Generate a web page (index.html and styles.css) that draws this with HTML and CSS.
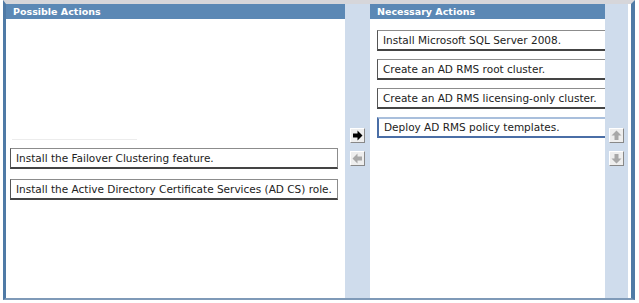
FILE: index.html
```
<!DOCTYPE html>
<html>
<head>
	<meta charset="utf-8">
	<title>Build List</title>
	<link rel="stylesheet" href="styles.css">
</head>
<body>
	<div class="frame">
		<div class="columns">
			<div class="panel left">
				<div class="head">Possible Actions</div>
				<div class="body">
					<div class="rule"></div>
					<div class="item">Install the Failover Clustering feature.</div>
					<div class="item">Install the Active Directory Certificate Services (AD CS) role.</div>
				</div>
			</div>
			<div class="gutter">
				<div class="btn">
					<svg width="11" height="11" viewBox="0 0 11 11"><path d="M1 3.5h4.5V0.5L10.5 5.5 5.5 10.5V7.5H1z" fill="#000"/></svg>
				</div>
				<div class="btn">
					<svg width="11" height="11" viewBox="0 0 11 11"><path d="M10 3.5H5.5V0.5L0.5 5.5 5.5 10.5V7.5H10z" fill="#a8a8a8"/></svg>
				</div>
			</div>
			<div class="panel right">
				<div class="head">Necessary Actions</div>
				<div class="body">
					<div class="item wide">Install Microsoft SQL Server 2008.</div>
					<div class="item wide">Create an AD RMS root cluster.</div>
					<div class="item wide">Create an AD RMS licensing-only cluster.</div>
					<div class="item wide selected">Deploy AD RMS policy templates.</div>
				</div>
			</div>
			<div class="gutter side">
				<div class="btn">
					<svg width="11" height="11" viewBox="0 0 11 11"><path d="M3.5 10V5.5H0.5L5.5 0.5 10.5 5.5H7.5V10z" fill="#a8a8a8"/></svg>
				</div>
				<div class="btn">
					<svg width="11" height="11" viewBox="0 0 11 11"><path d="M3.5 1V5.5H0.5L5.5 10.5 10.5 5.5H7.5V1z" fill="#a8a8a8"/></svg>
				</div>
			</div>
		</div>
	</div>
</body>
</html>
```

FILE: styles.css
```
body {
  margin: 0;
  background-color: #fff;
  font-family: "DejaVu Sans", Verdana, sans-serif;
}

.frame {
  width: 632px;
  height: 300px;
  box-sizing: border-box;
  border-top: 4px solid #d6d6da;
  border-left: 3px solid #4f7aa6;
  border-right: 4px solid #4f7aa6;
  border-bottom: 2px solid #7f9ab8;
  margin-left: 3px;
}

.columns {
  display: flex;
  height: 100%;
}

.panel {
  display: flex;
  flex-direction: column;
  overflow: hidden;
}

.left {
  width: 339px;
}

.right {
  width: 235px;
}

.head {
  height: 15px;
  background-color: #5b88b5;
  color: #fff;
  font-weight: bold;
  font-size: 9.5px;
  line-height: 15px;
  padding-left: 7px;
  flex-shrink: 0;
}

.body {
  flex: 1;
  background-color: #fff;
}

.left .body {
  padding: 120px 0 0 4px;
}

.right .body {
  padding: 11px 0 0 7px;
}

.rule {
  width: 125px;
  height: 1px;
  background-color: #ececec;
  margin-left: 2px;
  margin-bottom: 8px;
}

.item {
  box-sizing: border-box;
  width: 328px;
  height: 21px;
  border: 1px solid #8c8c8c;
  border-left: 1px solid #555;
  border-bottom: 2px solid #444;
  background-color: #fff;
  color: #222;
  font-size: 10.5px;
  line-height: 18px;
  padding-left: 5px;
  margin-bottom: 10px;
  white-space: nowrap;
}

.wide {
  width: 250px;
  margin-bottom: 8px;
}

.selected {
  border: 2px solid #4a6ea6;
  border-top-color: #a9bfdc;
  margin-top: 6px;
  line-height: 16px;
}

.gutter {
  width: 25px;
  background-color: #cfdcec;
  display: flex;
  flex-direction: column;
  align-items: center;
  padding-top: 124px;
  box-sizing: border-box;
  gap: 8px;
  flex-shrink: 0;
}

.side {
  width: 23px;
}

.btn {
  width: 15px;
  height: 15px;
  box-sizing: border-box;
  background-color: #eeeeee;
  border: 1px solid #fff;
  border-right-color: #888;
  border-bottom-color: #888;
  display: flex;
  align-items: center;
  justify-content: center;
}
```
